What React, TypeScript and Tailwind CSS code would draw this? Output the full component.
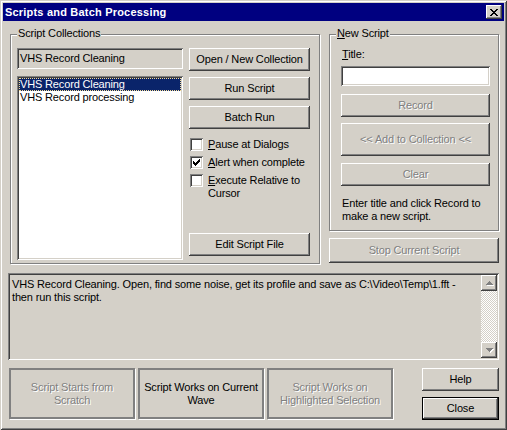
import React from "react";

const raised =
  "bg-[#d4d0c8] shadow-[inset_-1px_-1px_#404040,inset_1px_1px_#ffffff,inset_-2px_-2px_#808080,inset_2px_2px_#d4d0c8]";
const sunken =
  "shadow-[inset_1px_1px_#808080,inset_-1px_-1px_#ffffff,inset_2px_2px_#404040,inset_-2px_-2px_#d4d0c8]";
const greyed = "text-[#808080] [text-shadow:1px_1px_0_#ffffff]";

function Btn({
  label,
  disabled,
  className,
}: {
  label: React.ReactNode;
  disabled?: boolean;
  className?: string;
}) {
  return (
    <button
      className={`${raised} flex items-center justify-center leading-[13px] ${disabled ? greyed : "text-black"} ${className ?? ""}`}
    >
      {label}
    </button>
  );
}

function Group({
  label,
  className,
  children,
}: {
  label: React.ReactNode;
  className?: string;
  children: React.ReactNode;
}) {
  return (
    <div
      className={`relative border border-[#808080] shadow-[inset_1px_1px_#ffffff,1px_1px_#ffffff] ${className ?? ""}`}
    >
      <span className="absolute left-[6px] top-[-8px] bg-[#d4d0c8] px-[1px] leading-[13px]">
        {label}
      </span>
      {children}
    </div>
  );
}

const CHECK = [
  [6, 0], [5, 1], [6, 1], [0, 2], [4, 2], [5, 2], [6, 2],
  [0, 3], [1, 3], [3, 3], [4, 3], [5, 3], [0, 4], [1, 4], [2, 4], [3, 4], [4, 4],
  [1, 5], [2, 5], [3, 5], [2, 6],
];

const CROSS = [
  [0, 0], [1, 0], [6, 0], [7, 0], [1, 1], [2, 1], [5, 1], [6, 1],
  [2, 2], [3, 2], [4, 2], [5, 2], [3, 3], [4, 3],
  [2, 4], [3, 4], [4, 4], [5, 4], [1, 5], [2, 5], [5, 5], [6, 5],
  [0, 6], [1, 6], [6, 6], [7, 6],
];

function Check({ checked, children }: { checked?: boolean; children: React.ReactNode }) {
  return (
    <div className="flex items-start gap-[5px]">
      <div className={`${sunken} bg-white w-[13px] h-[13px] shrink-0 p-[3px]`}>
        {checked && (
          <svg width="7" height="7" viewBox="0 0 7 7" shapeRendering="crispEdges">
            {CHECK.map(([x, y], i) => (
              <rect key={i} x={x} y={y} width="1" height="1" fill="#000" />
            ))}
          </svg>
        )}
      </div>
      <div className="leading-[13px]">{children}</div>
    </div>
  );
}

function Arrow({ up }: { up?: boolean }) {
  return (
    <div className={`${raised} w-[16px] h-[16px] flex items-center justify-center`}>
      <svg width="8" height="5" viewBox="0 0 8 5" shapeRendering="crispEdges" className="overflow-visible">
        <path
          d={up ? "M4 0 L8 4 L0 4 Z" : "M0 0 L8 0 L4 4 Z"}
          fill="#ffffff"
          transform="translate(1 1)"
        />
        <path d={up ? "M4 0 L8 4 L0 4 Z" : "M0 0 L8 0 L4 4 Z"} fill="#808080" />
      </svg>
    </div>
  );
}

export default function App() {
  return (
    <div className="w-[507px] h-[430px] bg-[#d4d0c8] p-[3px] flex flex-col text-[11px] tracking-[-0.15px] text-black font-['Liberation_Sans',Arial,sans-serif] shadow-[inset_1px_1px_#d4d0c8,inset_-1px_-1px_#404040,inset_2px_2px_#ffffff,inset_-2px_-2px_#808080]">
      {/* title bar */}
      <div className="h-[18px] bg-[#000080] flex items-center pl-[2px] pr-[2px]">
        <span className="text-white font-bold tracking-[0.2px] leading-[13px]">
          Scripts and Batch Processing
        </span>
        <div className={`${raised} ml-auto w-[16px] h-[14px] flex items-center justify-center`}>
          <svg width="8" height="7" viewBox="0 0 8 7" shapeRendering="crispEdges">
            {CROSS.map(([x, y], i) => (
              <rect key={i} x={x} y={y} width="1" height="1" fill="#000" />
            ))}
          </svg>
        </div>
      </div>

      {/* top row */}
      <div className="flex items-start pl-[7px] mt-[13px]">
        <Group label="Script Collections" className="w-[310px] h-[230px]">
          <div className="flex pt-[13px] pl-[6px] gap-[6px]">
            <div className="w-[166px] flex flex-col gap-[7px]">
              <div className={`${sunken} h-[21px] pl-[3px] flex items-center`}>
                VHS Record Cleaning
              </div>
              <div className={`${sunken} bg-white h-[184px] p-[2px]`}>
                <div className="h-[13px] bg-[#0a246a] text-white pl-[1px] leading-[13px] outline outline-1 outline-dotted outline-[#f5db95] -outline-offset-1">
                  VHS Record Cleaning
                </div>
                <div className="h-[13px] pl-[1px] leading-[13px]">VHS Record processing</div>
              </div>
            </div>
            <div className="w-[121px] h-[208px] flex flex-col">
              <Btn label="Open / New Collection" className="h-[23px]" />
              <Btn label="Run Script" className="h-[23px] mt-[6px]" />
              <Btn label="Batch Run" className="h-[23px] mt-[6px]" />
              <div className="mt-[9px] flex flex-col gap-[5px] pl-[1px]">
                <Check>
                  <u>P</u>ause at Dialogs
                </Check>
                <Check checked>
                  <u>A</u>lert when complete
                </Check>
                <Check>
                  <u>E</u>xecute Relative to
                  <br />
                  Cursor
                </Check>
              </div>
              <Btn label="Edit Script File" className="h-[23px] mt-auto" />
            </div>
          </div>
        </Group>

        <div className="ml-[9px] w-[170px] flex flex-col">
          <Group
            label={
              <>
                <u>N</u>ew Script
              </>
            }
            className="h-[197px]"
          >
            <div className="flex flex-col pt-[13px] pl-[11px] w-[160px]">
              <div className="leading-[13px] pl-[1px]">
                <u>T</u>itle:
              </div>
              <div className={`${sunken} bg-white h-[20px] mt-[5px]`} />
              <Btn label="Record" disabled className="h-[23px] mt-[8px]" />
              <Btn label="<< Add to Collection <<" disabled className="h-[33px] mt-[6px]" />
              <Btn label="Clear" disabled className="h-[23px] mt-[7px]" />
              <div className="mt-[11px] leading-[13px] pl-[1px]">
                Enter title and click Record to
                <br />
                make a new script.
              </div>
            </div>
          </Group>
          <Btn label="Stop Current Script" disabled className="h-[25px] mt-[7px]" />
        </div>
      </div>

      {/* description */}
      <div className={`${sunken} ml-[5px] mt-[9px] w-[491px] h-[87px] flex p-[2px]`}>
        <div className="flex-1 pl-[2px] pt-[3px] leading-[13px]">
          VHS Record Cleaning. Open, find some noise, get its profile and save as C:\Video\Temp\1.fft -
          <br />
          then run this script.
        </div>
        <div className="w-[16px] flex flex-col">
          <Arrow up />
          <div className="flex-1 bg-[repeating-conic-gradient(#ffffff_0_25%,#d4d0c8_0_50%)] bg-[length:2px_2px]" />
          <Arrow />
        </div>
      </div>

      {/* bottom row */}
      <div className="flex items-start mt-[8px] pl-[6px]">
        <div className="flex gap-[3px]">
          <button className={`w-[126px] h-[51px] border-2 border-[#808080] shadow-[1px_1px_#ffffff] leading-[13px] ${greyed}`}>
            Script Starts from
            <br />
            Scratch
          </button>
          <button className="w-[126px] h-[51px] border-2 border-[#808080] shadow-[1px_1px_#ffffff] leading-[13px] text-black">
            Script Works on Current
            <br />
            Wave
          </button>
          <button className={`w-[126px] h-[51px] border-2 border-[#808080] shadow-[1px_1px_#ffffff] leading-[13px] ${greyed}`}>
            Script Works on
            <br />
            Highlighted Selection
          </button>
        </div>
        <div className="ml-auto mr-[5px] w-[77px] flex flex-col">
          <Btn label="Help" className="h-[23px]" />
          <div className="mt-[6px] border border-black">
            <Btn label="Close" className="h-[21px] w-full" />
          </div>
        </div>
      </div>
    </div>
  );
}
